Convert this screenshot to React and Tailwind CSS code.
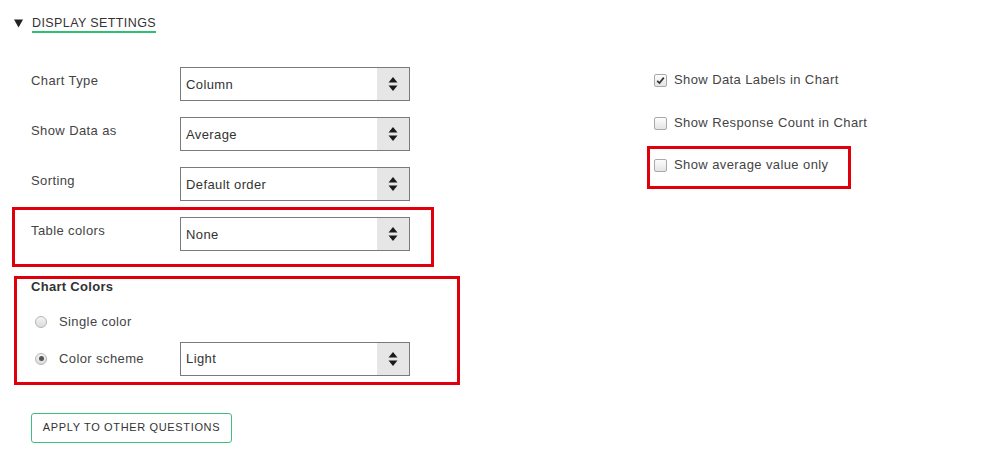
import React from 'react';

/* ============================================================
   DISPLAY SETTINGS panel
   ============================================================ */
const FONT = { fontFamily: '"Liberation Sans", Arial, sans-serif' };

function Arrows() {
  return (
    <svg width="10" height="16" viewBox="0 0 10 16" className="block">
      <path d="M5 1 L9.5 6.5 L0.5 6.5 Z" fill="#1a1a1a" />
      <path d="M5 15 L9.5 9.5 L0.5 9.5 Z" fill="#1a1a1a" />
    </svg>
  );
}

function Select({ value }) {
  return (
    <div className="w-[230px] h-[34px] border border-[#7a7a7a] bg-white flex items-stretch">
      <div className="flex-1 flex items-center pl-[5px] pt-[1px] text-[13px] tracking-[0.4px] text-[#333]">{value}</div>
      <div className="w-[32px] bg-[#e6e6e6] flex items-center justify-center">
        <Arrows />
      </div>
    </div>
  );
}

function Row({ label, value }) {
  return (
    <div className="flex h-[34px]">
      <div className="w-[149px] pt-[4px] text-[13px] tracking-[0.4px] text-[#444]">{label}</div>
      <Select value={value} />
    </div>
  );
}

function Check({ checked, label }) {
  return (
    <div className="flex items-center gap-[7px] h-[14px]">
      <div className="w-[13px] h-[13px] rounded-[2px] border border-[#a9a9a9] bg-gradient-to-b from-[#fdfdfd] to-[#e4e4e4] flex items-center justify-center">
        {checked && (
          <svg width="9" height="9" viewBox="0 0 9 9">
            <path d="M1.2 4.8 L3.5 7 L7.8 1.6" stroke="#333" strokeWidth="1.7" fill="none" />
          </svg>
        )}
      </div>
      <span className="text-[13px] tracking-[0.4px] text-[#444]">{label}</span>
    </div>
  );
}

function Radio({ checked, label }) {
  return (
    <div className="flex items-center">
      <div className="w-[12px] h-[12px] rounded-full border border-[#b5b5b5] bg-gradient-to-b from-[#f4f4f4] to-[#dcdcdc] flex items-center justify-center ml-[4px]">
        {checked && <div className="w-[5px] h-[5px] rounded-full bg-[#555]" />}
      </div>
      <span className="ml-[12px] text-[13px] tracking-[0.4px] text-[#444]">{label}</span>
    </div>
  );
}

export default function App() {
  return (
    <div className="w-[1005px] h-[465px] bg-white relative overflow-hidden" style={FONT}>
      {/* header */}
      <div className="flex items-center pt-[16px] pl-[14px]">
        <svg width="9" height="9" viewBox="0 0 9 9" className="block mb-[2px]">
          <path d="M0 0.5 L9 0.5 L4.5 8.5 Z" fill="#222" />
        </svg>
        <span className="ml-[9px] text-[12.5px] tracking-[0.4px] text-[#333] border-b-2 border-[#2fbf71] pb-[1px] leading-[14px]">DISPLAY SETTINGS</span>
      </div>

      <div className="flex pl-[31px] pt-[34px]">
        {/* left column */}
        <div className="w-[616px] flex flex-col">
          <div className="flex flex-col gap-[16px]">
            <Row label="Chart Type" value="Column" />
            <Row label="Show Data as" value="Average" />
            <Row label="Sorting" value="Default order" />
            <div className="relative">
              <Row label="Table colors" value="None" />
              <div className="absolute left-[-19px] top-[-10px] w-[422px] h-[60px] border-[3px] border-[#e0000b] pointer-events-none" />
            </div>
          </div>

          <div className="relative mt-[26px]">
            <div className="text-[13px] font-bold tracking-[0.3px] text-[#333] leading-[20px]">Chart Colors</div>
            <div className="mt-[15px]">
              <Radio label="Single color" />
            </div>
            <div className="flex items-center mt-[10px] h-[34px]">
              <div className="w-[149px]"><Radio checked label="Color scheme" /></div>
              <Select value="Light" />
            </div>
            <div className="absolute left-[-17px] top-[-1px] w-[446px] h-[109px] border-[3px] border-[#e0000b] pointer-events-none" />
          </div>

          <div className="mt-[37px]">
            <button className="w-[201px] h-[30px] border border-[#3fbf7f] rounded-[3px] text-[11px] tracking-[0.65px] text-[#333] bg-white">
              APPLY TO OTHER QUESTIONS
            </button>
          </div>
        </div>

        {/* right column */}
        <div className="flex flex-col pt-[6px] pl-[7px]">
          <Check checked label="Show Data Labels in Chart" />
          <div className="mt-[29px]"><Check label="Show Response Count in Chart" /></div>
          <div className="relative mt-[28px]">
            <Check label="Show average value only" />
            <div className="absolute left-[-7px] top-[-12px] w-[204px] h-[43px] border-[3px] border-[#e0000b] pointer-events-none" />
          </div>
        </div>
      </div>
    </div>
  );
}
